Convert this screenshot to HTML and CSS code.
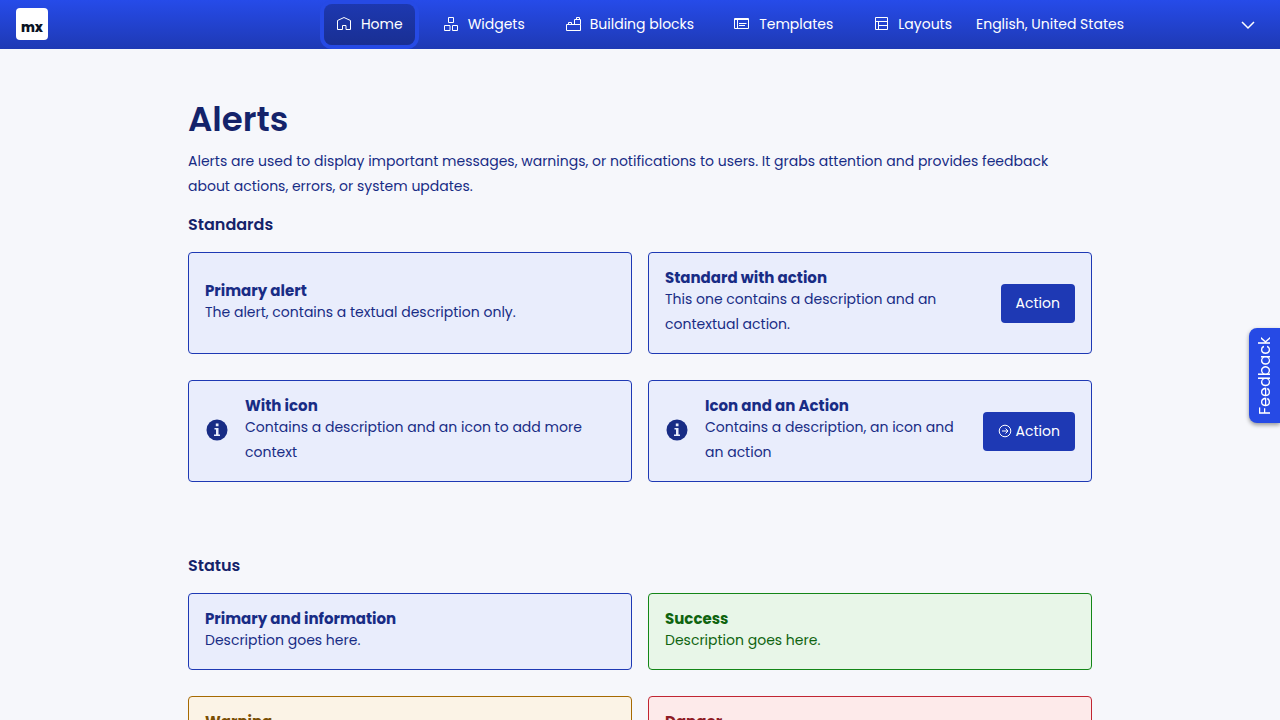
FILE: index.html
```html
<!DOCTYPE html>
<html lang="en">
<head>
<meta charset="utf-8">
<meta name="viewport" content="width=device-width, initial-scale=1">
<title>Alerts</title>
<link rel="stylesheet" href="styles.css">
</head>
<body>
<header class="topbar">
  <a class="logo" href="#" aria-label="mx home"><span class="logo-text">mx</span></a>
  <nav class="nav">
    <a class="nav-link active" href="#"><svg class="nav-icon" viewBox="0 0 16 16"><path d="M1.5 4.500 8 1.5 14.500 4.500V13.5H10V9.500H6.500V13.500H1.500Z"/></svg><span>Home</span></a>
    <a class="nav-link" href="#"><svg class="nav-icon" viewBox="0 0 16 16"><path d="M5.500 1.500h5v5h-5zM1.500 9.500h5.500v5H1.500zM9.500 9.500h5v5h-5z"/></svg><span>Widgets</span></a>
    <a class="nav-link" href="#"><svg class="nav-icon" viewBox="0 0 16 16"><path d="M1.500 8.500H15.500V14.500H1.500ZM3.500 8.500V6.500H6.500V8.500M9.500 8.500V3.500H15.500V8.500M11.500 3.500V1.500H14.500V3.500"/></svg><span>Building blocks</span></a>
    <a class="nav-link" href="#"><svg class="nav-icon" viewBox="0 0 16 16"><path d="M.5 2.500h14v10H.5zM.5 3.500h14M3.500 3.500v9M5 7.500h7.500M5 9.500h6"/></svg><span>Templates</span></a>
    <a class="nav-link" href="#"><svg class="nav-icon" viewBox="0 0 16 16"><path d="M2.500 1.500h12v12h-12zM2.500 5.500h12M5.500 5.500v8M5.500 9.500h9"/></svg><span>Layouts</span></a>
  </nav>
  <div class="language">
    <select class="language-select" aria-label="Language"><option>English, United States</option></select>
    <svg class="chevron" viewBox="0 0 16 16"><path d="m2 5 6 6 6-6"/></svg>
  </div>
</header>

<main class="page">
  <h1 class="title">Alerts</h1>
  <p class="intro">Alerts are used to display important messages, warnings, or notifications to users. It grabs attention and provides feedback about actions, errors, or system updates.</p>

  <section class="section">
    <h2 class="section-title">Standards</h2>
    <div class="grid">
      <article class="alert">
        <div class="alert-body"><h3 class="alert-title">Primary alert</h3><p class="alert-text">The alert, contains a textual description only.</p></div>
      </article>
      <article class="alert">
        <div class="alert-body"><h3 class="alert-title">Standard with action</h3><p class="alert-text">This one contains a description and an contextual action.</p></div>
        <button class="action" type="button">Action</button>
      </article>
      <article class="alert">
        <svg class="info" viewBox="0 0 24 24"><circle cx="12" cy="11" r="10.500"/><path d="M10.800 4.500h2.700v2.700h-2.700zM9.500 9h4v6.500H15V17H9v-1.500h2v-5H9.500z"/></svg>
        <div class="alert-body"><h3 class="alert-title">With icon</h3><p class="alert-text">Contains a description and an icon to add more context</p></div>
      </article>
      <article class="alert">
        <svg class="info" viewBox="0 0 24 24"><circle cx="12" cy="11" r="10.500"/><path d="M10.800 4.500h2.700v2.700h-2.700zM9.500 9h4v6.500H15V17H9v-1.500h2v-5H9.500z"/></svg>
        <div class="alert-body"><h3 class="alert-title">Icon and an Action</h3><p class="alert-text">Contains a description, an icon and an action</p></div>
        <button class="action" type="button"><svg class="action-icon" viewBox="0 0 14 14"><circle cx="7" cy="7" r="5.800"/><path d="M4 7h6M7.500 4.500 10 7 7.500 9.500"/></svg>Action</button>
      </article>
    </div>
  </section>

  <section class="section">
    <h2 class="section-title">Status</h2>
    <div class="grid">
      <article class="alert">
        <div class="alert-body"><h3 class="alert-title">Primary and information</h3><p class="alert-text">Description goes here.</p></div>
      </article>
      <article class="alert success">
        <div class="alert-body"><h3 class="alert-title">Success</h3><p class="alert-text">Description goes here.</p></div>
      </article>
      <article class="alert warning">
        <div class="alert-body"><h3 class="alert-title">Warning</h3><p class="alert-text">Description goes here.</p></div>
      </article>
      <article class="alert danger">
        <div class="alert-body"><h3 class="alert-title">Danger</h3><p class="alert-text">Description goes here.</p></div>
      </article>
    </div>
  </section>
</main>
<button class="feedback" type="button">Feedback</button>
</body>
</html>
```
FILE: styles.css
```css
* { box-sizing: border-box; }
html { scrollbar-width: none; }
body {
  margin: 0;
  background: #f6f7fb;
  color: #182c85;
  font: 14px/25px Poppins, Inter, "Open Sans", sans-serif;
}
h1, h2, h3, p { margin: 0; }
button, select { font: inherit; }

.topbar {
  position: sticky;
  top: 0;
  z-index: 1;
  display: flex;
  align-items: center;
  height: 49px;
  padding: 0 16px 1px;
  background: linear-gradient(#264be9, #1e39b4);
  color: #fff;
}
.logo {
  display: flex;
  align-items: flex-end;
  justify-content: center;
  width: 32px;
  height: 32px;
  padding-bottom: 4px;
  border-radius: 4px;
  background: #fff;
  color: #0a1325;
  text-decoration: none;
}
.logo-text { font-size: 13px; line-height: 16px; font-weight: 800; }
.nav {
  flex: 1;
  display: flex;
  justify-content: flex-end;
  gap: 16px;
}
.nav-link {
  display: flex;
  align-items: center;
  gap: 9px;
  height: 41px;
  padding: 0 12px;
  border-radius: 8px;
  color: #fff;
  text-decoration: none;
  white-space: nowrap;
}
.nav-link.active {
  background: linear-gradient(#1d38b0, #192f93);
  box-shadow: 0 0 0 4px #264ae5;
}
.nav-icon { width: 16px; height: 16px; }
.nav-icon, .chevron, .action-icon { fill: none; stroke: currentColor; }

.language { position: relative; width: 300px; }
.language-select {
  width: 100%;
  height: 40px;
  padding: 0 12px;
  border: 0;
  background: transparent;
  color: #fff;
  appearance: none;
}
.chevron {
  position: absolute;
  right: 8px;
  top: 13px;
  width: 16px;
  height: 16px;
  stroke-width: 1.5;
  pointer-events: none;
}

.page { max-width: 936px; margin: 0 auto; padding: 48px 16px; }
.title { margin-bottom: 8px; color: #14236a; font-size: 34px; line-height: 44px; font-weight: 600; }
.section-title {
  margin: 14px 0 15px;
  color: #14236a;
  font-size: 16px;
  line-height: 24px;
  font-weight: 600;
}
.section + .section { margin-top: 72px; }
.grid { display: grid; grid-template-columns: 1fr 1fr; gap: 26px 16px; }
.alert {
  display: flex;
  align-items: center;
  gap: 16px;
  padding: 16px;
  border: 1px solid #1e39b4;
  border-radius: 4px;
  background: #e9edfc;
  color: #182c85;
}
.alert-body { flex: 1; }
.alert-title { font-size: 15px; line-height: 18px; font-weight: 700; }
.success { border-color: #138617; background: #e8f6e8; color: #0f640f; }
.warning { border-color: #a66a02; background: #fbf3e6; color: #7a4e04; }
.danger { border-color: #c12632; background: #fdeaea; color: #8e1b25; }
.info { flex: none; width: 24px; height: 24px; fill: #182c85; }
.info path { fill: #e9edfc; }
.action {
  display: flex;
  align-items: center;
  gap: 4px;
  padding: 7px 15px;
  border: 0;
  border-radius: 4px;
  background: #1e39b4;
  color: #fff;
}
.action-icon { width: 14px; height: 14px; }
.feedback {
  position: fixed;
  right: 0;
  top: 328px;
  width: 31px;
  height: 95px;
  padding: 0;
  border: 0;
  border-radius: 0 8px 8px 0;
  background: #264ae5;
  box-shadow: 0 -2px 4px rgba(0, 0, 0, .4);
  color: #fff;
  font-size: 16px;
  writing-mode: vertical-rl;
  transform: rotate(180deg);
}
```
